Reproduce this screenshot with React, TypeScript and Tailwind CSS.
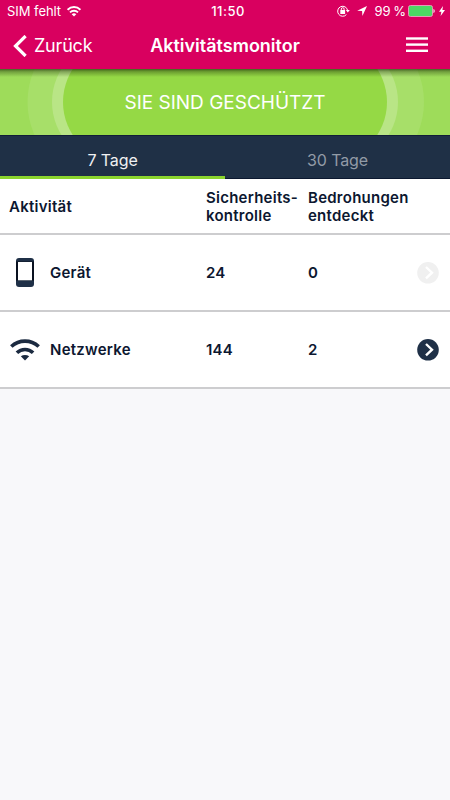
import React from 'react';

interface ActivityRowProps {
  icon: React.ReactNode;
  label: string;
  checks: number;
  threats: number;
  active?: boolean;
}

const WifiIcon: React.FC<{ className?: string }> = ({ className }) => (
  <svg viewBox="0 0 30 22" className={className} fill="none" stroke="currentColor" strokeWidth="3.6">
    <path d="M1.3 7.5C9.2.3 20.8.3 28.7 7.5" />
    <path d="M6.9 13.8C11.4 9.4 18.6 9.4 23.1 13.8" />
    <path d="M10.8 17.2C13.2 15.6 16.8 15.6 19.2 17.2L15 21.4Z" fill="currentColor" stroke="none" />
  </svg>
);

const PhoneIcon: React.FC = () => (
  <svg viewBox="0 0 18 29" className="h-[29px] w-[18px]">
    <rect width="18" height="29" rx="3" fill="#1f3047" />
    <rect y="3.5" width="18" height="19" fill="#0a1220" />
    <rect x="2" y="4" width="14" height="18.3" fill="#fff" />
  </svg>
);

const ActivityRow: React.FC<ActivityRowProps> = ({ icon, label, checks, threats, active }) => (
  <div className="flex h-[77px] items-center border-b-2 border-[#cdcdcf] bg-white text-[15px] font-semibold tracking-[0.25px] text-[#0c1730]">
    <div className="flex w-[50px] justify-center">{icon}</div>
    <div className="w-[156px] pt-[2px]">{label}</div>
    <div className="w-[102px] pt-[2px]">{checks}</div>
    <div className="w-[109px] pt-[2px]">{threats}</div>
    <svg viewBox="0 0 22 22" className="size-[22px]">
      <circle cx="11" cy="10.8" r="10.8" fill={active ? '#1f3047' : '#f0f0f0'} />
      <path d="M9 5L15 10.7L9 16.4" fill="none" stroke="#fff" strokeWidth="2.4" />
    </svg>
  </div>
);

const StatusBar: React.FC = () => (
  <div className="grid h-[23px] grid-cols-3 items-center pr-[5px] pl-[7px] text-[13px] leading-none whitespace-nowrap">
    <div className="flex items-center gap-[6px]">
      <span className="tracking-[-0.05px]">SIM fehlt</span>
      <svg viewBox="0 0 14 11" className="h-[11px] w-[14px]" fill="none" stroke="#fff" strokeWidth="1.9">
        <path d="M.6 3.8C4.2.1 9.8.1 13.4 3.8M3 6.4C5.2 4.2 8.8 4.2 11 6.4" />
        <path d="M4.7 8.2C6 7 8 7 9.3 8.2L7 10.4Z" fill="#fff" stroke="none" />
      </svg>
    </div>
    <span className="pl-[4px] text-center font-medium tracking-[0.5px]">11:50</span>
    <div className="flex items-center justify-end">
      <svg viewBox="0 0 13 12" className="mr-[7px] mb-px h-[12px] w-[13px] shrink-0" fill="none" stroke="#fff">
        <path d="M9.4 9.6A5 5 0 1 1 10.6 5.4" />
        <path d="M8.8 5H12.8L10.8 7.6Z" fill="#fff" stroke="none" />
        <rect x="3.3" y="5" width="4.8" height="4" fill="#fff" stroke="none" />
        <path d="M4.3 5.2V4.1A1.4 1.4 0 0 1 7.1 4.1V5.2" />
      </svg>
      <svg viewBox="0 0 10 10" className="mr-[7px] mb-px size-[10px] shrink-0" fill="#fff">
        <path d="M10 0L.2 4.7L5.1 5L5.4 10Z" />
      </svg>
      <span className="mr-[2px] [word-spacing:-1px]">99 %</span>
      <svg viewBox="0 0 27 12" className="mr-[4px] mb-px h-[12px] w-[27px] shrink-0">
        <rect x=".5" y=".5" width="24" height="11" rx="2" fill="#4cd964" stroke="#e79aba" />
        <path d="M25.5 4V8C27 7.6 27 4.4 25.5 4Z" fill="#fff" />
      </svg>
      <svg viewBox="0 0 6 10" className="mb-px h-[10px] w-[6px] shrink-0" fill="#fff">
        <path d="M4 0L0 5.7H2.4L1.6 10L6 4H3.4Z" />
      </svg>
    </div>
  </div>
);

const App: React.FC = () => {
  return (
    <div className="min-h-screen w-[450px] bg-[#f8f8fa] font-['Inter','Liberation_Sans',sans-serif]">
      <header className="h-[69px] bg-[#d9005f] text-white">
        <StatusBar />
        <div className="grid h-[45px] grid-cols-[138px_174px_138px] items-center">
          <div className="flex items-center pl-[13px]">
            <svg viewBox="0 0 14 22" className="mr-[7px] h-[22px] w-[14px]" fill="none" stroke="#fff" strokeWidth="3.2">
              <path d="M12.6 1L2.5 11L12.6 21" />
            </svg>
            <span className="text-[18px] tracking-[-0.2px]">Zurück</span>
          </div>
          <h1 className="text-center text-[18px] font-semibold whitespace-nowrap">Aktivitätsmonitor</h1>
          <svg viewBox="0 0 22 16" className="mr-[22px] mb-px h-[16px] w-[22px] justify-self-end" fill="#fff">
            <rect y=".3" width="22" height="2.4" />
            <rect y="6.4" width="22" height="2.4" />
            <rect y="12.6" width="22" height="2.4" />
          </svg>
        </div>
      </header>

      <section className="relative flex h-[66px] items-center justify-center overflow-hidden bg-[#9edc5a]">
        <svg viewBox="0 0 450 66" className="absolute inset-0 h-[66px] w-[450px]">
          <defs>
            <linearGradient id="shade" x1="0" y1="0" x2="0" y2="1">
              <stop offset="0" stopColor="#20330b" stopOpacity=".7" />
              <stop offset=".35" stopColor="#20330b" stopOpacity=".35" />
              <stop offset="1" stopColor="#20330b" stopOpacity="0" />
            </linearGradient>
          </defs>
          <rect x="27.5" y="-48" width="396.5" height="162" rx="81" fill="#a7df69" />
          <rect x="52" y="-29" width="346" height="124" rx="62" fill="#b9e586" />
          <rect x="63" y="-28" width="324" height="122" rx="61" fill="#95d945" />
          <rect width="450" height="8" fill="url(#shade)" />
        </svg>
        <span className="relative pt-[2px] text-[19px] text-white">SIE SIND GESCHÜTZT</span>
      </section>

      <nav className="grid h-11 grid-cols-2 border-t border-[#111e38] bg-[#1f3046] text-center text-[16px] leading-[48px] tracking-[-0.1px]">
        <div className="h-[43px] border-b-[3px] border-[#8bd42e] text-[#f0f1f3]">7 Tage</div>
        <div className="h-[43px] border-b border-[#0b1830] text-[#929ba6]">30 Tage</div>
      </nav>

      <main>
        <div className="flex h-[56px] items-center border-b-2 border-[#cdcdcf] bg-white pt-px pl-[9px] text-[15px] leading-[18px] font-semibold tracking-[0.25px] text-[#0c1730]">
          <div className="w-[197px]">Aktivität</div>
          <div className="w-[102px]">Sicherheits-<br />kontrolle</div>
          <div>Bedrohungen<br />entdeckt</div>
        </div>
        <ActivityRow icon={<PhoneIcon />} label="Gerät" checks={24} threats={0} />
        <ActivityRow
          icon={<WifiIcon className="h-[22px] w-[30px] text-[#1b2a40]" />}
          label="Netzwerke"
          checks={144}
          threats={2}
          active
        />
      </main>
    </div>
  );
};

export default App;
